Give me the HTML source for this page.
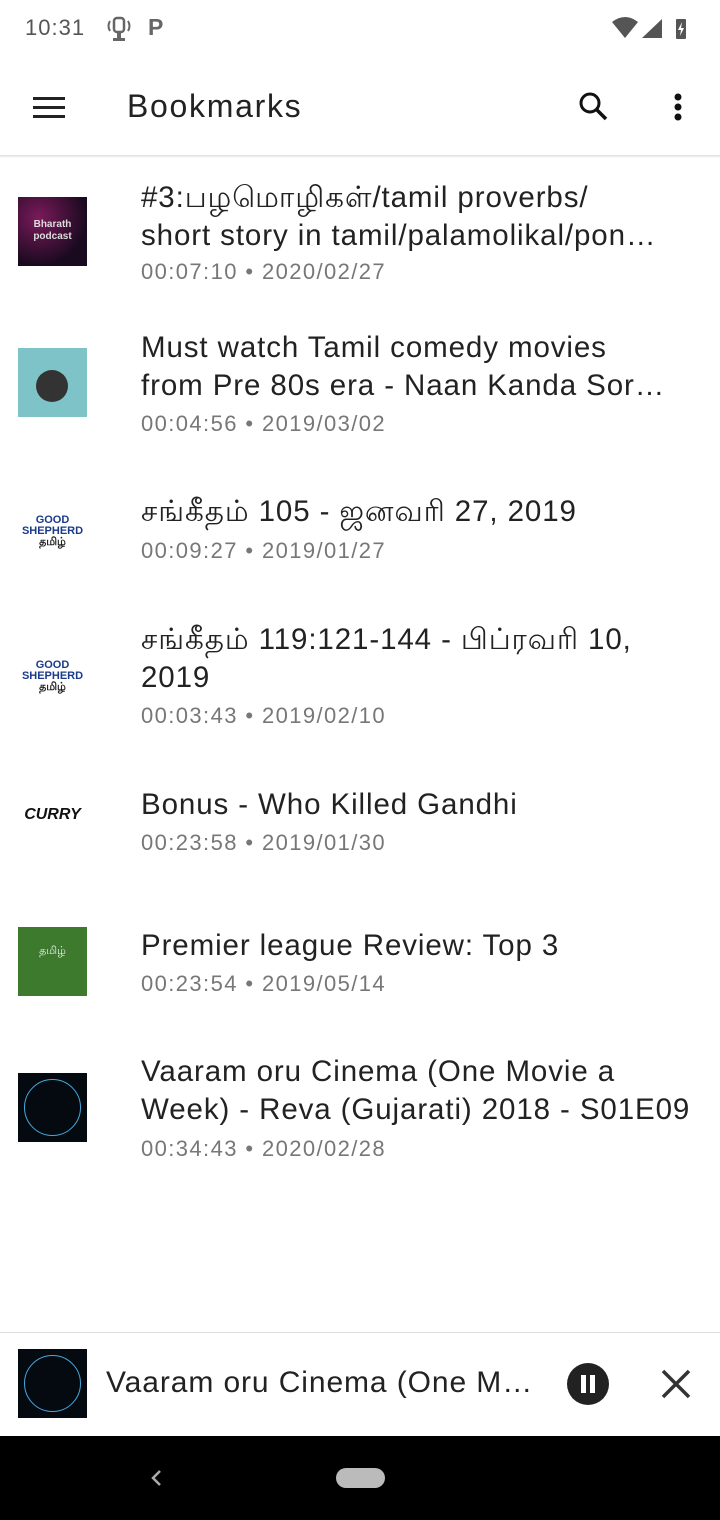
<!DOCTYPE html>
<html><head><meta charset="utf-8"><style>
*{margin:0;padding:0;box-sizing:border-box}
body{width:720px;height:1520px;background:#fff;position:relative;overflow:hidden;font-family:"Liberation Sans","Noto Sans CJK SC",sans-serif;color:#1a1a1a}
.abs{position:absolute}
.t{position:absolute;left:141px;width:535px;font-size:29.5px;letter-spacing:0.9px;line-height:38px;color:#222;white-space:nowrap;overflow:hidden;text-overflow:ellipsis}
.m{position:absolute;left:141px;font-size:22px;letter-spacing:1.4px;line-height:26px;color:#777}
.th{position:absolute;left:18px;width:69px;height:69px}
</style></head><body>
<div class="abs" style="left:25px;top:15px;font-size:22px;letter-spacing:1px;color:#555">10:31</div>
<svg class="abs" style="left:106px;top:16px" width="26" height="28" viewBox="0 0 26 28"><rect x="8" y="2" width="10" height="14" rx="3" fill="none" stroke="#666" stroke-width="2.5"/><rect x="11" y="16" width="4" height="6" fill="#666"/><rect x="7" y="22" width="12" height="3" fill="#666"/><path d="M4 5q-3 5 0 10M22 5q3 5 0 10" stroke="#666" stroke-width="2" fill="none"/></svg>
<div class="abs" style="left:148px;top:14px;font-size:23px;font-weight:bold;color:#666">P</div>
<svg class="abs" style="left:610px;top:16px" width="90" height="26"><path d="M2 6q13-10 26 0L15 22z" fill="#555"/><path d="M32 22h20V3z" fill="#555"/><rect x="66" y="3" width="10" height="20" rx="1" fill="#555"/><path d="M72 6l-4 8h3l-1 6 4-8h-3z" fill="#fff"/></svg>
<svg class="abs" style="left:33px;top:96px" width="33" height="24"><rect y="1" width="32" height="3" fill="#222"/><rect y="10" width="32" height="3" fill="#222"/><rect y="19" width="32" height="3" fill="#222"/></svg>
<div class="abs" style="left:127px;top:88px;font-size:32px;letter-spacing:1.7px;color:#222">Bookmarks</div>
<svg class="abs" style="left:578px;top:91px" width="32" height="32"><circle cx="12" cy="12" r="9" fill="none" stroke="#111" stroke-width="3"/><path d="M18 18l10 10" stroke="#111" stroke-width="3.5"/></svg>
<svg class="abs" style="left:672px;top:92px" width="12" height="32"><circle cx="6" cy="5" r="3.5" fill="#111"/><circle cx="6" cy="15" r="3.5" fill="#111"/><circle cx="6" cy="25" r="3.5" fill="#111"/></svg>
<div class="abs" style="left:0;top:155px;width:720px;height:3px;background:linear-gradient(#ddd,#fff)"></div>

<div class="th" style="top:197px;background:radial-gradient(circle at 30% 30%,#7a1a5a,#1a0a20 70%);color:#ddd;font-size:10px;font-weight:bold;text-align:center;padding-top:22px;line-height:12px">Bharath<br>podcast</div>
<div class="t" style="top:179px">#3:பழமொழிகள்/tamil proverbs/</div>
<div class="t" style="top:217px">short story in tamil/palamolikal/ponmozhigal</div>
<div class="m" style="top:259px">00:07:10 • 2020/02/27</div>

<div class="th" style="top:348px;background:#7ec3c8"><div style="position:absolute;left:18px;top:22px;width:32px;height:32px;border-radius:50%;background:#333"></div></div>
<div class="t" style="top:329px">Must watch Tamil comedy movies</div>
<div class="t" style="top:367px">from Pre 80s era - Naan Kanda Sorgam</div>
<div class="m" style="top:411px">00:04:56 • 2019/03/02</div>

<div class="th" style="top:497px;color:#1a3a8a;font-size:11px;font-weight:bold;text-align:center;padding-top:18px;line-height:11px">GOOD<br>SHEPHERD<br><span style="color:#222">தமிழ்</span></div>
<div class="t" style="top:493px">சங்கீதம் 105 - ஜனவரி 27, 2019</div>
<div class="m" style="top:538px">00:09:27 • 2019/01/27</div>

<div class="th" style="top:642px;color:#1a3a8a;font-size:11px;font-weight:bold;text-align:center;padding-top:18px;line-height:11px">GOOD<br>SHEPHERD<br><span style="color:#222">தமிழ்</span></div>
<div class="t" style="top:621px">சங்கீதம் 119:121-144 - பிப்ரவரி 10,</div>
<div class="t" style="top:659px">2019</div>
<div class="m" style="top:703px">00:03:43 • 2019/02/10</div>

<div class="th" style="top:782px;font-size:16px;font-weight:bold;font-style:italic;text-align:center;padding-top:24px;color:#111">CURRY</div>
<div class="t" style="top:786px">Bonus - Who Killed Gandhi</div>
<div class="m" style="top:830px">00:23:58 • 2019/01/30</div>

<div class="th" style="top:927px;background:#3d7a2e;color:#eee;font-size:11px;text-align:center;padding-top:18px">தமிழ்</div>
<div class="t" style="top:927px">Premier league Review: Top 3</div>
<div class="m" style="top:971px">00:23:54 • 2019/05/14</div>

<div class="th" style="top:1073px;background:#050a10"><div style="position:absolute;left:6px;top:6px;width:57px;height:57px;border-radius:50%;border:1px solid #4ad"></div></div>
<div class="t" style="top:1053px">Vaaram oru Cinema (One Movie a</div>
<div class="t" style="top:1091px;width:560px">Week) - Reva (Gujarati) 2018 - S01E09</div>
<div class="m" style="top:1136px">00:34:43 • 2020/02/28</div>

<div class="abs" style="left:0;top:1332px;width:720px;height:1px;background:#ddd"></div>
<div class="th" style="top:1349px;background:#050a10"><div style="position:absolute;left:6px;top:6px;width:57px;height:57px;border-radius:50%;border:1px solid #4ad"></div></div>
<div class="abs" style="left:106px;top:1366px;width:435px;font-size:30px;letter-spacing:0.9px;color:#222;white-space:nowrap;overflow:hidden;text-overflow:ellipsis">Vaaram oru Cinema (One Movie a Week)</div>
<svg class="abs" style="left:566px;top:1362px" width="44" height="44"><circle cx="22" cy="22" r="21" fill="#222"/><rect x="15" y="13" width="5" height="18" fill="#fff"/><rect x="24" y="13" width="5" height="18" fill="#fff"/></svg>
<svg class="abs" style="left:660px;top:1368px" width="32" height="32"><path d="M3 3l26 26M29 3L3 29" stroke="#333" stroke-width="3.5"/></svg>
<div class="abs" style="left:0;top:1436px;width:720px;height:84px;background:#000"></div>
<svg class="abs" style="left:148px;top:1468px" width="16" height="20"><path d="M12 3L5 10l7 7" stroke="#aaa" stroke-width="2.5" fill="none"/></svg>
<div class="abs" style="left:336px;top:1468px;width:49px;height:20px;border-radius:10px;background:#bbb"></div>
</body></html>
